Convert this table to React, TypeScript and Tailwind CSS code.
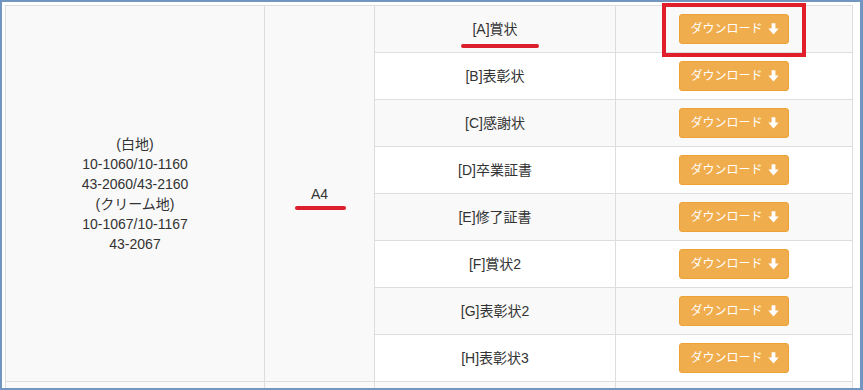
import React from 'react';

const FONT = { fontFamily: '"Liberation Sans", Arial, "Noto Sans CJK JP", sans-serif' };

const forms = ['[A]賞状', '[B]表彰状', '[C]感謝状', '[D]卒業証書', '[E]修了証書', '[F]賞状2', '[G]表彰状2', '[H]表彰状3'];

const paperLines = ['(白地)', '10-1060/10-1160', '43-2060/43-2160', '(クリーム地)', '10-1067/10-1167', '43-2067'];

// solid down arrow used on the download buttons
const ArrowDown = () => (
  <svg width="11" height="12" viewBox="0 0 11 12" className="shrink-0">
    <path d="M3.6 0.3h3.8v5.3h3.3L5.5 11.6 0.3 5.6h3.3z" fill="#fff" />
  </svg>
);

const DownloadButton = () => (
  <button className="flex h-[30px] w-[110px] items-center justify-center gap-[5px] rounded-[3px] border border-[#eea236] bg-[#f0ad4e] pl-[1px] text-[12px] leading-[18px] text-white">
    <span>ダウンロード</span>
    <ArrowDown />
  </button>
);

export default function App() {
  return (
    <div
      className="relative h-[390px] w-[863px] overflow-hidden border-b-2 border-l-2 border-r-[3px] border-t-2 border-[#7396c1] bg-white pl-[3px] pt-[3px] text-[14px] leading-[20px] text-[#333]"
      style={FONT}
    >
      <div className="grid w-[848px] grid-cols-[259px_110px_241px_237px] grid-rows-[repeat(9,47px)] border-l border-t border-[#ddd]">
        <div className="row-span-8 flex flex-col items-center justify-center border-b border-r border-[#ddd] bg-[#f9f9f9] text-center">
          {paperLines.map((l) => (
            <div key={l}>{l}</div>
          ))}
        </div>
        <div className="row-span-8 flex items-center justify-center border-b border-r border-[#ddd] bg-[#f9f9f9]">
          A4
        </div>
        {forms.map((name, i) => {
          const bg = i % 2 === 0 ? 'bg-[#f9f9f9]' : 'bg-white';
          return (
            <React.Fragment key={name}>
              <div className={`flex items-center justify-center border-b border-r border-[#ddd] ${bg}`}>{name}</div>
              <div className={`flex items-center justify-center border-b border-r border-[#ddd] ${bg}`}>
                <DownloadButton />
              </div>
            </React.Fragment>
          );
        })}
        {/* next group, cut off at the bottom */}
        <div className="border-r border-[#ddd] bg-[#f9f9f9]" />
        <div className="border-r border-[#ddd] bg-[#f9f9f9]" />
        <div className="border-r border-[#ddd] bg-[#f9f9f9]" />
        <div className="border-r border-[#ddd] bg-[#f9f9f9]" />
      </div>

      {/* red markup */}
      <div className="absolute left-[660px] top-[1px] h-[54px] w-[144px] border-4 border-[#e01f2b]" />
      <div className="absolute left-[459px] top-[42px] h-[4px] w-[78px] rounded-full bg-[#dc1f2c]" />
      <div className="absolute left-[293px] top-[204px] h-[4px] w-[51px] rounded-full bg-[#dc1f2c]" />
    </div>
  );
}
